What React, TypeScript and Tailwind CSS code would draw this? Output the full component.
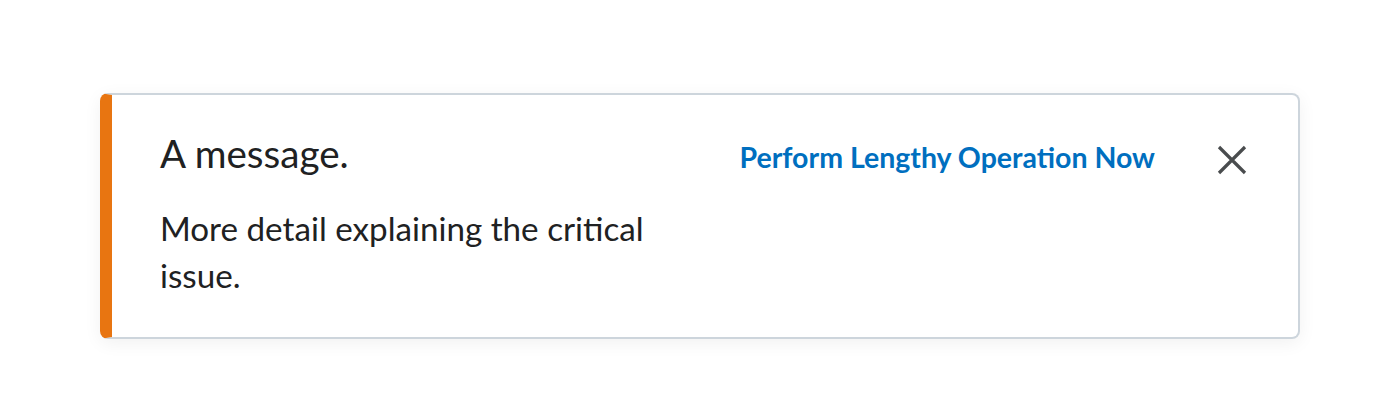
import React from 'react';

const App: React.FC = () => {
  return (
    <div className="min-h-[400px] bg-white px-[100px] pt-[93px] font-['Lato',sans-serif]">
      <div className="flex w-[1200px] h-[246px] rounded-[8px] border-2 border-l-[12px] border-[#cdd5dc] border-l-[#e87511] bg-white shadow-[0_4px_18px_rgba(0,0,0,0.06)]">
        <div className="w-[560px] pl-[48px] pt-[36px]">
          <h2 className="text-[38.6px] leading-[44px] text-[#202122]">A message.</h2>
          <p className="mt-[30px] text-[33.2px] leading-[47px] text-[#202122]">
            More detail explaining the critical issue.
          </p>
        </div>
        <div className="flex flex-1 justify-end items-start pt-[42px] pr-[50px]">
          <button className="text-[28.5px] font-bold leading-[40px] text-[#006fbf]">
            Perform Lengthy Operation Now
          </button>
          <button className="ml-[61px] mt-[7px] flex text-[#494c4e]" aria-label="Close">
            <svg width="32" height="32" viewBox="0 0 32 32" fill="none" stroke="currentColor" strokeWidth="3.2" strokeLinecap="butt">
              <path d="M3 3 L29 29 M29 3 L3 29" />
            </svg>
          </button>
        </div>
      </div>
    </div>
  );
};

export default App;
